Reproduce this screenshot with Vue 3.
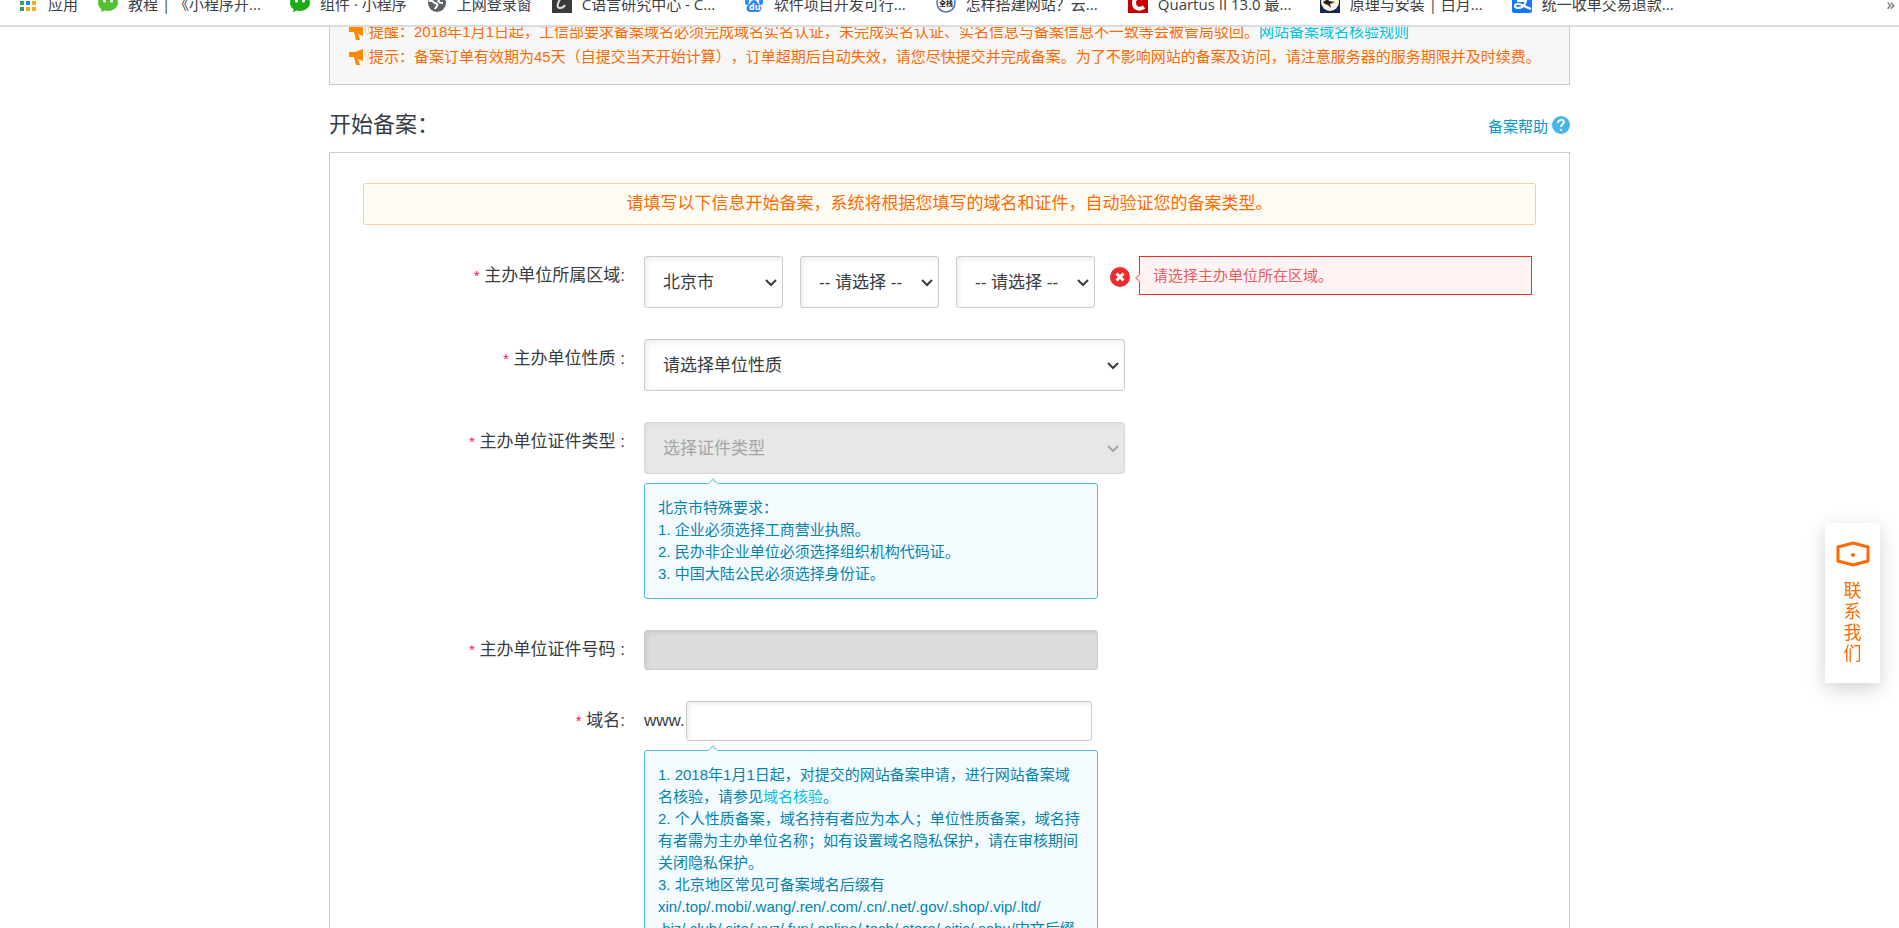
<script setup>
import { ref } from 'vue'

const bookmarks = [
  { icon: 'apps', label: '应用' },
  { icon: 'wechatLight', label: '教程 | 《小程序开...', wide: true },
  { icon: 'wechat', label: '组件 · 小程序' },
  { icon: 'globe', label: '上网登录窗' },
  { icon: 'clang', label: 'C语言研究中心 - C...', wide: true },
  { icon: 'baidu', label: '软件项目开发可行...', wide: true },
  { icon: 'stack', label: '怎样搭建网站？云...', wide: true },
  { icon: 'quartus', label: 'Quartus II 13.0 最...', wide: true },
  { icon: 'moon', label: '原理与安装 | 白月...', wide: true },
  { icon: 'alipay', label: '统一收单交易退款...', wide: true },
]

const appDots = ['#34a853', '#4285f4', '#ea4335', '#34a853', '#1a8cff', '#fba71b', '#34a060', '#fba71b', '#fba71b'].map(
  (fill, i) => ({ fill, x: 2 + (i % 3) * 6, y: 2 + Math.floor(i / 3) * 6 })
)

const province = ref('北京市')
const city = ref('')
const district = ref('')
const nature = ref('')
const certType = ref('')
const certNo = ref('')
const domain = ref('')
</script>

<template>
  <div class="page">
    <header class="bar">
      <nav class="bookmarks">
        <a v-for="b in bookmarks" :key="b.label" href="#" class="bookmark" :class="{ wide: b.wide }">
          <svg class="favicon" viewBox="0 0 20 20" aria-hidden="true">
            <template v-if="b.icon === 'apps'">
              <rect v-for="(d, i) in appDots" :key="i" :x="d.x" :y="d.y" width="4" height="4" :fill="d.fill" />
            </template>
            <g v-else-if="b.icon === 'wechat' || b.icon === 'wechatLight'">
              <path
                :fill="b.icon === 'wechat' ? '#1aad19' : '#51c332'"
                d="M10 1C4.500 1 0 4.800 0 9.700c0 2.700 1.400 5 3.600 6.600L3 19.300l3.500-1.900c1.100.3 2.300.5 3.500.5 5.500 0 10-3.600 10-8.200S15.500 1 10 1z"
              />
              <circle cx="6.500" cy="8" r="1.500" fill="#fff" />
              <circle cx="13.500" cy="8" r="1.500" fill="#fff" />
            </g>
            <g v-else-if="b.icon === 'globe'">
              <circle cx="10" cy="10" r="9" fill="#5f6368" />
              <path
                d="M2 8c4-1 4 1 6 2s3 1 2 3-2 2-2 3M10 3c0 3 3 2 2 4-2 2 1 3 4 3"
                fill="none"
                stroke="#fff"
                stroke-width="2"
              />
            </g>
            <g v-else-if="b.icon === 'clang'">
              <rect width="20" height="20" fill="#3a3a3a" />
              <path d="M14 6c0-3-5-2-7 2s-2 7 1 7c2 0 4-1 5-3" fill="none" stroke="#ddd" stroke-width="2" />
            </g>
            <g v-else-if="b.icon === 'baidu'" fill="#2f86f6">
              <ellipse cx="7" cy="4" rx="2" ry="3" />
              <ellipse cx="13" cy="4" rx="2" ry="3" />
              <ellipse cx="3" cy="9" rx="2" ry="3" />
              <ellipse cx="17" cy="9" rx="2" ry="3" />
              <path d="M10 7c-3 0-3 3-6 5-3 3-1 7 2 7h8c3 0 5-4 2-7-3-2-3-5-6-5z" />
              <text x="5" y="17" class="mark du">du</text>
            </g>
            <g v-else-if="b.icon === 'stack'">
              <circle cx="10" cy="10" r="9" fill="#fff" stroke="#5a6fc0" stroke-width="1.500" />
              <text x="3" y="13" class="mark zh">全栈</text>
            </g>
            <g v-else-if="b.icon === 'quartus'">
              <rect width="20" height="20" fill="#c80000" />
              <path d="M15 6c-3-3-9-2-9 4s6 7 10 4" fill="none" stroke="#fff" stroke-width="4" />
            </g>
            <g v-else-if="b.icon === 'moon'">
              <rect width="20" height="20" fill="#14265a" />
              <circle cx="10" cy="9" r="9" fill="#fbf3dc" />
              <path d="M3 9l5-3 1 2 6 1-5 2 1 4-3-3-3-1z" fill="#222" />
            </g>
            <g v-else>
              <rect width="20" height="20" rx="2" fill="#1677ff" />
              <path
                d="M5 5h10M10 2v6M5 8h9c-1 4-4 7-8 7-4 0-4-4 0-4s7 3 13 5"
                fill="none"
                stroke="#fff"
                stroke-width="2"
              />
            </g>
          </svg>
          <span>{{ b.label }}</span>
        </a>
        <button type="button" class="more" aria-label="更多书签">»</button>
      </nav>
    </header>

    <main class="content">
      <div class="container">
        <section class="notice">
          <p>
            <svg class="horn" viewBox="0 0 20 16" aria-hidden="true">
              <path d="M0 3h6l8-3v12l-5-2 2 6H7L5 8H0z" fill="#ff8a00" />
              <path d="M16 3c1 2 1 4 0 6M18 1c2 3 2 7 0 10" fill="none" stroke="#ffd09a" />
            </svg>
            <span>提醒：2018年1月1日起，工信部要求备案域名必须完成域名实名认证，未完成实名认证、实名信息与备案信息不一致等会被管局驳回。<a href="#">网站备案域名核验规则</a></span>
          </p>
          <p>
            <svg class="horn" viewBox="0 0 20 16" aria-hidden="true">
              <path d="M0 3h6l8-3v12l-5-2 2 6H7L5 8H0z" fill="#ff8a00" />
              <path d="M16 3c1 2 1 4 0 6M18 1c2 3 2 7 0 10" fill="none" stroke="#ffd09a" />
            </svg>
            <span>提示：备案订单有效期为45天（自提交当天开始计算），订单超期后自动失效，请您尽快提交并完成备案。为了不影响网站的备案及访问，请注意服务器的服务期限并及时续费。</span>
          </p>
        </section>

        <div class="heading">
          <h1>开始备案：</h1>
          <a href="#" class="help">
            备案帮助
            <svg viewBox="0 0 18 18" aria-hidden="true">
              <circle cx="9" cy="9" r="9" fill="#45b5ec" />
              <path d="M6 7c0-4 6-4 6-1 0 2-3 2-3 5" fill="none" stroke="#fff" stroke-width="2" />
              <circle cx="9" cy="14" r="1.200" fill="#fff" />
            </svg>
          </a>
        </div>

        <form class="panel" @submit.prevent>
          <p class="banner">请填写以下信息开始备案，系统将根据您填写的域名和证件，自动验证您的备案类型。</p>

          <div class="row">
            <label for="province" class="label"><i>*</i> 主办单位所属区域:</label>
            <div class="region">
              <span class="select small">
                <select id="province" v-model="province">
                  <option>北京市</option>
                </select>
                <svg viewBox="0 0 12 8" aria-hidden="true"><path d="M1 1l5 5 5-5" /></svg>
              </span>
              <span class="select small">
                <select v-model="city" aria-label="城市">
                  <option value="">-- 请选择 --</option>
                </select>
                <svg viewBox="0 0 12 8" aria-hidden="true"><path d="M1 1l5 5 5-5" /></svg>
              </span>
              <span class="select small">
                <select v-model="district" aria-label="区县">
                  <option value="">-- 请选择 --</option>
                </select>
                <svg viewBox="0 0 12 8" aria-hidden="true"><path d="M1 1l5 5 5-5" /></svg>
              </span>
              <svg class="error-icon" viewBox="0 0 20 20" aria-hidden="true">
                <circle cx="10" cy="10" r="10" fill="#ee2a2d" />
                <path d="M6.500 6.500l7 7M13.500 6.500l-7 7" stroke="#fff" stroke-width="3" />
              </svg>
              <p class="error" role="alert">
                <svg viewBox="0 0 6 10" aria-hidden="true">
                  <path d="M6 0L1 5l5 5z" fill="#fff3f3" />
                  <path d="M5 1L1 5l4 4" fill="none" stroke="#f58a8c" stroke-width="1.500" />
                </svg>
                请选择主办单位所在区域。
              </p>
            </div>
          </div>

          <div class="row">
            <label for="nature" class="label"><i>*</i> 主办单位性质 :</label>
            <span class="select large">
              <select id="nature" v-model="nature">
                <option value="">请选择单位性质</option>
              </select>
              <svg viewBox="0 0 12 8" aria-hidden="true"><path d="M1 1l5 5 5-5" /></svg>
            </span>
          </div>

          <div class="row">
            <label for="cert-type" class="label"><i>*</i> 主办单位证件类型 :</label>
            <div class="field">
              <span class="select large disabled">
                <select id="cert-type" v-model="certType" disabled>
                  <option value="">选择证件类型</option>
                </select>
                <svg viewBox="0 0 12 8" aria-hidden="true"><path d="M1 1l5 5 5-5" /></svg>
              </span>
              <div class="hint">
                <svg viewBox="0 0 10 6" aria-hidden="true">
                  <path d="M0 6l5-5 5 5z" fill="#f3fbff" />
                  <path d="M1 5l4-4 4 4" fill="none" stroke="#8fd6ef" stroke-width="1.500" />
                </svg>
                <p>北京市特殊要求：</p>
                <p>1. 企业必须选择工商营业执照。</p>
                <p>2. 民办非企业单位必须选择组织机构代码证。</p>
                <p>3. 中国大陆公民必须选择身份证。</p>
              </div>
            </div>
          </div>

          <div class="row">
            <label for="cert-no" class="label"><i>*</i> 主办单位证件号码 :</label>
            <input id="cert-no" v-model="certNo" type="text" class="text cert" disabled />
          </div>

          <div class="row">
            <label for="domain" class="label"><i>*</i> 域名:</label>
            <div class="field">
              <div class="domain">
                <span>www.</span>
                <input id="domain" v-model="domain" type="text" class="text" />
              </div>
              <div class="hint">
                <svg viewBox="0 0 10 6" aria-hidden="true">
                  <path d="M0 6l5-5 5 5z" fill="#f3fbff" />
                  <path d="M1 5l4-4 4 4" fill="none" stroke="#8fd6ef" stroke-width="1.500" />
                </svg>
                <p>1. 2018年1月1日起，对提交的网站备案申请，进行网站备案域名核验，请参见<a href="#">域名核验</a>。</p>
                <p>2. 个人性质备案，域名持有者应为本人；单位性质备案，域名持有者需为主办单位名称；如有设置域名隐私保护，请在审核期间关闭隐私保护。</p>
                <p>
                  3. 北京地区常见可备案域名后缀有<br />xin/.top/.mobi/.wang/.ren/.com/.cn/.net/.gov/.shop/.vip/.ltd/<br />.biz/.club/.site/.xyz/.fun/.online/.tech/.store/.citic/.sohu/中文后缀
                </p>
              </div>
            </div>
          </div>
        </form>
      </div>
    </main>

    <button type="button" class="contact">
      <svg viewBox="0 0 34 26" aria-hidden="true">
        <path d="M17 2l15 4v14l-15 4-15-4V6z" fill="none" stroke="#ff6a00" stroke-width="3" />
        <circle cx="17" cy="14" r="2" fill="#ff6a00" />
      </svg>
      <span>联系我们</span>
    </button>
  </div>
</template>

<style>
body {
  margin: 0;
  background: #fff;
}
</style>

<style scoped>
.page {
  display: flex;
  flex-direction: column;
  height: 100vh;
  overflow: hidden;
  font-family: "Liberation Sans", "Noto Sans CJK SC", sans-serif;
  font-size: 15px;
  color: #373d41;
}
.page * {
  box-sizing: border-box;
}
p,
h1 {
  margin: 0;
  font-weight: 400;
}
a {
  color: #00c1de;
  text-decoration: none;
}
button,
select,
input {
  font: inherit;
  color: inherit;
}

.bar {
  flex: none;
  display: flex;
  align-items: flex-end;
  height: 27px;
  overflow: hidden;
  border-bottom: 2px solid #dadce0;
  font-family: "Open Sans", "Noto Sans CJK SC", sans-serif;
}
.bookmarks {
  flex: 1;
  display: flex;
  align-items: center;
  gap: 20px;
  height: 32px;
  margin-bottom: 6px;
  padding: 0 4px 0 18px;
}
.bookmark {
  display: flex;
  align-items: center;
  gap: 10px;
  color: #3c4043;
  white-space: nowrap;
}
.wide {
  width: 172px;
}
.favicon {
  flex: none;
  width: 20px;
  height: 20px;
}
.mark {
  font-weight: 700;
}
.du {
  font-size: 9px;
  fill: #fff;
}
.zh {
  font-size: 7px;
  fill: #222;
}
.more {
  margin-left: auto;
  padding: 0;
  border: 0;
  background: none;
  color: #5f6368;
  font-size: 17px;
}

.content {
  flex: 1;
  min-height: 0;
  overflow: hidden;
}
.container {
  max-width: 1241px;
  margin: 0 auto;
}
.notice {
  margin-top: -9px;
  padding: 0 19px 15px;
  border: 1px solid #ccc;
  background: #f7f7f7;
  color: #ff6a00;
  text-spacing-trim: space-all;
}
.notice p {
  display: flex;
  align-items: center;
  line-height: 25px;
  white-space: nowrap;
}
.horn {
  width: 20px;
  height: 16px;
}
.heading {
  display: flex;
  align-items: center;
  justify-content: space-between;
  padding: 24px 0 11px;
}
h1 {
  font-size: 22px;
  line-height: 32px;
}
.help {
  display: flex;
  align-items: center;
  gap: 4px;
  color: #0099cc;
}
.help svg {
  width: 18px;
  height: 18px;
}

.panel {
  display: flex;
  flex-direction: column;
  gap: 31px;
  padding: 30px 33px;
  border: 1px solid #ccc;
  font-size: 17px;
}
.banner {
  border: 1px solid #fc9;
  border-radius: 3px;
  background: #fffcf5;
  color: #ff6a00;
  line-height: 40px;
  text-align: center;
}
.row {
  display: grid;
  grid-template-columns: 262px 1fr;
  column-gap: 19px;
  align-items: start;
}
.label {
  line-height: 40px;
  text-align: right;
  white-space: nowrap;
}
.label i {
  color: #f15;
  font-size: 15px;
  font-style: normal;
}
.region {
  display: flex;
  gap: 17px;
}
.select {
  position: relative;
  display: block;
}
.small {
  flex: none;
  width: 139px;
}
.large {
  width: 481px;
}
.select select {
  display: block;
  width: 100%;
  height: 52px;
  padding: 0 18px;
  appearance: none;
  border: 1px solid #ccc;
  border-radius: 3px;
  background: #fff;
  box-shadow: inset 2px 2px 6px rgba(0, 0, 0, 0.08);
}
.select svg {
  position: absolute;
  right: 6px;
  top: 23px;
  width: 12px;
  height: 8px;
  fill: none;
  stroke: #373d41;
  stroke-width: 2;
  pointer-events: none;
}
.disabled select {
  border-color: #d8d8d8;
  background: #e7e7e7;
  color: #a4a6a8;
  opacity: 1;
  box-shadow: inset 1px 1px 4px rgba(0, 0, 0, 0.05);
}
.disabled svg {
  stroke: #a4a6a8;
}
.error-icon {
  flex: none;
  width: 20px;
  height: 20px;
  margin: 11px -8px 0 -2px;
}
.error {
  position: relative;
  flex: none;
  width: 393px;
  padding: 0 13px;
  border: 1px solid #f02a2d;
  background: #fff3f3;
  color: #ec5b60;
  font-size: 15px;
  line-height: 37px;
  align-self: flex-start;
}
.error svg {
  position: absolute;
  left: -5px;
  top: 16px;
  width: 6px;
  height: 10px;
}
.hint {
  position: relative;
  width: 454px;
  margin-top: 9px;
  padding: 13px;
  border: 1px solid #4cbde6;
  border-radius: 3px;
  background: #f3fbff;
  color: #0683ae;
  font-size: 15px;
  line-height: 22px;
}
.hint svg {
  position: absolute;
  left: 63px;
  top: -6px;
  width: 10px;
  height: 6px;
}
.text {
  display: block;
  height: 40px;
  padding: 0 12px;
  border: 1px solid #ccc;
  border-radius: 3px;
  background: #fff;
  box-shadow: inset 2px 2px 5px rgba(0, 0, 0, 0.08);
}
.cert {
  width: 454px;
  background: #ddd;
}
.domain {
  display: flex;
  align-items: center;
  gap: 1px;
  width: 448px;
}
.domain .text {
  flex: 1;
  min-width: 0;
}

.contact {
  position: fixed;
  right: 19px;
  top: 523px;
  display: flex;
  flex-direction: column;
  align-items: center;
  gap: 14px;
  width: 55px;
  padding: 18px 0;
  border: 0;
  background: #fff;
  box-shadow: 0 6px 20px rgba(0, 0, 0, 0.18);
  color: #ff6a00;
  font-size: 18px;
  line-height: 21px;
}
.contact svg {
  width: 34px;
  height: 26px;
}
.contact span {
  width: 18px;
}
</style>
